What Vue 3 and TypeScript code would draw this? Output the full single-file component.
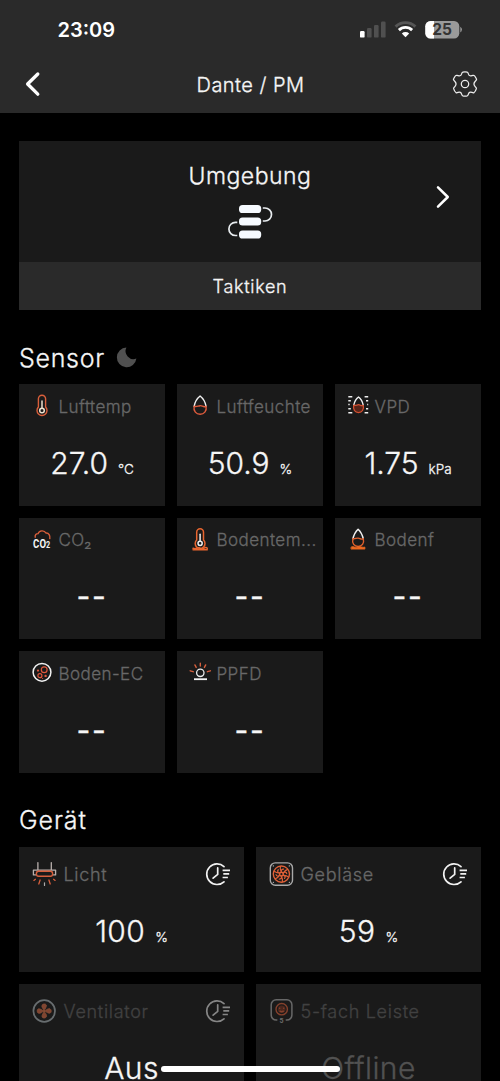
<script setup lang="ts">
interface Sensor {
  icon: string
  label: string
  value: string
  unit?: string
}

interface Device {
  icon: string
  label: string
  value: string
  unit?: string
  timer?: boolean
  state?: 'off' | 'offline'
}

const sensors: Sensor[] = [
  { icon: 'temp', label: 'Lufttemp', value: '27.0', unit: '°C' },
  { icon: 'drop', label: 'Luftfeuchte', value: '50.9', unit: '%' },
  { icon: 'vpd', label: 'VPD', value: '1.75', unit: 'kPa' },
  { icon: 'co2', label: 'CO₂', value: '--' },
  { icon: 'soiltemp', label: 'Bodentem...', value: '--' },
  { icon: 'soildrop', label: 'Bodenf', value: '--' },
  { icon: 'ec', label: 'Boden-EC', value: '--' },
  { icon: 'ppfd', label: 'PPFD', value: '--' },
]

const devices: Device[] = [
  { icon: 'light', label: 'Licht', value: '100', unit: '%', timer: true },
  { icon: 'blower', label: 'Gebläse', value: '59', unit: '%', timer: true },
  { icon: 'fan', label: 'Ventilator', value: 'Aus', timer: true, state: 'off' },
  { icon: 'strip', label: '5-fach Leiste', value: 'Offline', state: 'offline' },
]

const spokes = [0, 60, 120, 180, 240, 300]
const blades = [0, 90, 180, 270]
</script>

<template>
  <div class="screen">
    <header class="top">
      <div class="status">
        <span class="clock">23:09</span>
        <svg class="status-icons" width="104" height="20" viewBox="0 0 104 20">
          <rect x="0" y="11" width="4.6" height="6.6" rx="1.2" fill="#fff" />
          <g fill="#505050">
            <rect x="7" y="8" width="4.6" height="9.6" rx="1.2" />
            <rect x="14" y="5" width="4.6" height="12.6" rx="1.2" />
            <rect x="21" y="1.6" width="4.6" height="16" rx="1.2" />
          </g>
          <g fill="none" stroke-width="2.9">
            <path d="M35.6 6.6a14.2 14.2 0 0 1 19.8 0" stroke="#565656" />
            <path d="M38.9 10.1a9.4 9.4 0 0 1 13.2 0" stroke="#fff" />
          </g>
          <path d="M45.5 17.3l-3.7-3.9a5.4 5.4 0 0 1 7.4 0z" fill="#fff" />
          <rect x="65.3" y="1" width="34" height="17.4" rx="5.2" fill="#9a9a9a" />
          <path d="M70.5 1H74v17.4h-3.5a5.2 5.2 0 0 1-5.2-5.2v-7a5.2 5.2 0 0 1 5.2-5.2z" fill="#fff" />
          <path d="M100.3 6.8a3.2 3.2 0 0 1 0 5.6z" fill="#9a9a9a" />
          <text x="82" y="15.1" text-anchor="middle" class="battery">25</text>
        </svg>
      </div>
      <nav class="nav">
        <svg width="18" height="28" viewBox="0 0 18 28">
          <path d="M13.8 4L3.6 14l10.2 10.2" fill="none" stroke="#fff" stroke-width="3.3" stroke-linecap="round" stroke-linejoin="round" />
        </svg>
        <h1 class="title">Dante / PM</h1>
        <svg width="28" height="28" viewBox="0 0 28 28" fill="none" stroke="#eee" stroke-width="1.25" stroke-linejoin="round">
          <path d="M11.7 2.2Q14 1.5 16.3 2.2Q17.2 2.6 17.4 4Q17.8 6.1 20 5.9L22 5.3Q23.4 5 24.3 6.8Q25.7 9 25.5 9.8Q25.2 10.4 24.3 11.2Q21.6 14 24.3 16.8Q25.5 17.8 25.4 18.6Q24.6 21.2 23 22.6Q22.3 23 21 22.4Q18.1 21.4 17.4 24.1Q17.1 25.4 16.3 25.8Q14 26.4 11.7 25.8Q10.9 25.4 10.6 24.1Q9.9 21.4 7 22.4Q5.7 23 5 22.6Q3.4 21.2 2.6 18.6Q2.5 17.8 3.7 16.8Q6.4 14 3.7 11.2Q2.8 10.4 2.5 9.8Q2.3 9 3.7 6.8Q4.6 5 6 5.3L8 5.9Q10.2 6.1 10.6 4Q10.8 2.6 11.7 2.2Z" />
          <circle cx="14" cy="14" r="3.7" />
        </svg>
      </nav>
    </header>

    <main class="content">
      <section class="env">
        <div class="env-main">
          <span class="env-title">Umgebung</span>
          <svg width="46" height="36" viewBox="0 0 46 36">
            <g fill="#f6faff">
              <rect x="12" y="1" width="22.2" height="8" rx="3.6" />
              <rect x="12" y="13.6" width="22.2" height="8" rx="3.6" />
              <rect x="12" y="26.5" width="22.2" height="8" rx="3.6" />
            </g>
            <g fill="none" stroke="#e8ecef" stroke-width="1.7">
              <path d="M35.8 4h2.2a6.4 6.4 0 0 1 0 13h-2.2" />
              <path d="M10.3 18.3H8.5a6.6 6.6 0 0 0 0 13.2h1.8" />
            </g>
          </svg>
          <svg class="env-arrow" width="18" height="28" viewBox="0 0 18 28">
            <path d="M4 4.4l9.8 9.6L4 23.7" fill="none" stroke="#fff" stroke-width="2.5" stroke-linecap="round" stroke-linejoin="round" />
          </svg>
        </div>
        <div class="env-foot">Taktiken</div>
      </section>

      <h2 class="heading sensor-heading">
        Sensor
        <svg width="22" height="22" viewBox="0 0 22 22">
          <path d="M10.4 .6A9.8 9.8 0 1 0 20.4 11.6A8 8 0 0 1 10.4 .6Z" fill="#505050" />
        </svg>
      </h2>

      <section class="sensors">
        <article v-for="s in sensors" :key="s.label" class="card sensor">
          <div class="row">
            <svg class="glyph" width="24" height="26" viewBox="0 0 24 26" fill="none" stroke-linecap="round" stroke-linejoin="round">
              <g v-if="s.icon === 'temp'">
                <path d="M8.4 14V5.8a3.6 3.6 0 0 1 7.2 0V14a5 5 0 1 1-7.2 0z" stroke="#d95f3b" stroke-width="1.4" />
                <path d="M12 8v7" stroke="#eee1cf" stroke-width="1.5" />
                <circle cx="12" cy="17.5" r="2.3" stroke="#eee1cf" stroke-width="1.5" />
              </g>
              <g v-else-if="s.icon === 'drop'" stroke-width="1.4">
                <path d="M6.1 13.3C6.9 9.2 9.5 5 12.1 3c2.6 2 5.2 6.2 6 10.3" stroke="#f0f0f0" />
                <path d="M6.1 13.3c-.9 4.8 2.2 8 6 8s6.9-3.2 6-8c-2.8 1.6-3.8-1-6.1-.6s-3.5 1.4-5.9.6z" stroke="#df5c3d" />
              </g>
              <g v-else-if="s.icon === 'vpd'">
                <path d="M2.3 3.7h4M2.3 7.7h2.5M2.3 11.6h1.4M2.3 15.7h2.5M2.3 19.7h4M18.6 3.7h3.6M20 7.7h2.2M21.2 11.6h1M20 15.7h2.2M18.6 19.7h3.6" stroke="#eee" stroke-width="1.5" stroke-linecap="butt" />
                <path d="M7.7 12.3C8.4 9 10.3 5.6 12.5 4c2.2 1.6 4.1 5 4.8 8.3" stroke="#f0f0f0" stroke-width="1.4" />
                <path d="M7.7 12.3c-.9 4.1 1.3 7.3 4.8 7.3s5.7-3.2 4.8-7.3c-2 1.4-3.2-.8-4.8-.6s-2.8 1-4.8.6z" stroke="#d35031" stroke-width="1.3" fill="#562419" />
              </g>
              <g v-else-if="s.icon === 'co2'">
                <path d="M5.2 10.2c-.4-2.5 1-3.7 2.9-3.6 1-3.4 6.3-3.6 7.8-.6 3-.3 4.4 2.6 3.9 5.6" stroke="#d95f3b" stroke-width="1.4" />
                <text x="3.9" y="20.6" transform="scale(0.8 1)" class="co2">CO<tspan class="co2-small">2</tspan></text>
              </g>
              <g v-else-if="s.icon === 'soiltemp'">
                <path d="M8.7 13V5.2a3.4 3.4 0 0 1 6.8 0V13a4.9 4.9 0 1 1-6.8 0z" stroke="#e8652f" stroke-width="1.5" />
                <path d="M12.1 7.2v7" stroke="#eee" stroke-width="1.5" />
                <circle cx="12.1" cy="16.3" r="2.1" stroke="#eee" stroke-width="1.5" />
                <path d="M5 21.3q2 .8 4-.1t3.5.3 3.5-.3 3.3.1M5 22.8h14.3" stroke="#e8652f" stroke-width="1.5" />
              </g>
              <g v-else-if="s.icon === 'soildrop'">
                <path d="M6.9 11.7C7.9 8 9.8 4.4 12.1 2.3c2.3 2.1 4.2 5.7 5.2 9.4" stroke="#f0f0f0" stroke-width="1.5" />
                <path d="M6.9 11.7c-1.2 4.8 1.5 7.8 5.2 7.8s6.4-3 5.2-7.8c-2 1.4-3.3-.5-5.2-.6s-3.1 1-5.2.6z" stroke="#e0602d" stroke-width="1.4" />
                <path d="M5.4 19.9q1.4-.7 2.9.1t3.8.1 3.6-.1 3.2.1v2H5.4z" fill="#ec6820" stroke="#ec6820" stroke-width=".8" />
              </g>
              <g v-else-if="s.icon === 'ec'">
                <circle cx="12" cy="12.3" r="8.9" stroke="#f2f2f2" stroke-width="1.5" />
                <circle cx="14.2" cy="9.8" r="2.9" stroke="#e0563b" stroke-width="1.2" />
                <circle cx="9.9" cy="15.7" r="2" stroke="#e0563b" stroke-width="1.2" />
                <circle cx="8" cy="10.6" r="1.1" fill="#e0563b" />
                <circle cx="15.6" cy="15.9" r="1.2" fill="#e0563b" />
                <circle cx="12.6" cy="18.5" r=".6" fill="#e0563b" />
              </g>
              <g v-else>
                <circle cx="12.3" cy="12.8" r="3.7" stroke="#ececec" stroke-width="1.3" />
                <path d="M6 19.2h13" stroke="#f4f4f4" stroke-width="1.8" stroke-linecap="butt" />
                <path d="M12.3 3.2v2.9M6.9 4.9l1.3 2.5M17.7 4.9l-1.3 2.5M2.2 10.8l3 .9M22.4 10.8l-3 .9" stroke="#d65f3d" stroke-width="1.4" />
              </g>
            </svg>
            <span class="label">{{ s.label }}</span>
          </div>
          <div class="reading">
            <span class="value" :class="{ empty: !s.unit }">{{ s.value }}</span>
            <span v-if="s.unit" class="unit">{{ s.unit }}</span>
          </div>
        </article>
      </section>

      <h2 class="heading device-heading">Gerät</h2>

      <section class="devices">
        <article v-for="d in devices" :key="d.label" class="card device" :class="d.state">
          <div class="row">
            <svg class="glyph" width="26" height="26" viewBox="0 0 26 26" fill="none" stroke-linecap="round" stroke-linejoin="round">
              <g v-if="d.icon === 'light'">
                <path d="M6.9 1.6v7.2M20.3 1.6v7.2M4.5 13.9H2.4V9.1h22.2v4.8h-2.1" stroke="#b9b0ad" stroke-width="1.3" />
                <rect x="5.4" y="10.3" width="16.2" height="5" rx="2.2" stroke="#d65f3d" stroke-width="1.4" />
                <path d="M4.4 18.3l-1.5 1.1M22.6 18.3l1.5 1.1M9.1 19l-1.3 4M17.9 19l1.3 4" stroke="#d65f3d" stroke-width="1.3" />
                <path d="M13.5 21.8v2.6" stroke="#aaa" stroke-width="1.2" />
              </g>
              <g v-else-if="d.icon === 'blower'">
                <rect x="2.3" y="1.9" width="22.2" height="22.4" rx="5" stroke="#a9a9a9" stroke-width="1.4" />
                <path d="M5.3 4.9h.2M21.3 4.9h.2M5.3 21.3h.2M21.3 21.3h.2" stroke="#a9a9a9" stroke-width="1.3" />
                <circle cx="13.4" cy="13.1" r="8.1" stroke="#df6037" stroke-width="1.4" />
                <circle cx="13.4" cy="13.1" r="1.9" stroke="#df6037" stroke-width="1.4" />
                <path v-for="a in spokes" :key="a" d="M13.4 11.2C12.8 9 14 7.9 15.6 8.2M13.4 11.2C12.4 9 11.8 7.4 12.4 5.3" :transform="`rotate(${a} 13.4 13.1)`" stroke="#df6037" stroke-width="1.2" />
              </g>
              <g v-else-if="d.icon === 'fan'">
                <circle cx="13.2" cy="13" r="10.8" stroke="#b5bfc3" stroke-width="1.7" />
                <path v-for="a in blades" :key="a" d="M13.2 13c-.4-2-3-3.4-2.2-5.8.8-1.6 3.6-1.6 4.3-.2.5 2.3-1.4 3.4-2.1 6z" :transform="`rotate(${a} 13.2 13)`" fill="#e87048" stroke="#f08050" stroke-width=".8" />
              </g>
              <g v-else>
                <path d="M8.2 22.1H7.6a5 5 0 0 1-5-5V6.7a5 5 0 0 1 5-5h10.7a5 5 0 0 1 5 5v10.4a5 5 0 0 1-5 5h-.6" transform="translate(.6)" stroke="#b4b4b4" stroke-width="1.5" />
                <circle cx="13.7" cy="11.2" r="5.7" stroke="#f0683f" stroke-width="1.4" />
                <circle cx="13.7" cy="11.2" r="3.8" fill="#7a321f" />
                <path d="M11.6 10.2h.1M15.7 10.2h.1M12 13.2q1.7 1.2 3.4 0" stroke="#f0683f" stroke-width="1.5" />
                <text x="13.6" y="24.5" text-anchor="middle" class="socket-count">5</text>
              </g>
            </svg>
            <span class="label">{{ d.label }}</span>
            <svg v-if="d.timer" class="timer" width="26" height="26" viewBox="0 0 26 26" fill="none" stroke="#f2f2f2" stroke-width="1.7" stroke-linecap="round" stroke-linejoin="round">
              <path d="M19 5.6A10.3 10.3 0 1 0 19 20.8" />
              <path d="M12.7 6.9v6.5l-4.6 3.8" />
              <path d="M17.6 9.3h7.4M18.3 12.9h5.9M17.6 16.5h5.3" stroke-linecap="butt" />
            </svg>
          </div>
          <div class="reading">
            <span class="value">{{ d.value }}</span>
            <span v-if="d.unit" class="unit">{{ d.unit }}</span>
          </div>
        </article>
      </section>
    </main>

    <div class="home-indicator"></div>
  </div>
</template>

<style>
body {
  background: #000;
}
</style>

<style scoped>
.screen {
  position: relative;
  box-sizing: border-box;
  height: 1081px;
  overflow: hidden;
  background: #000;
  color: #f6f6f6;
  font-family: Inter, "Noto Sans", sans-serif;
  font-weight: 300;
}

svg {
  display: block;
  flex: none;
}

/* Slightly heavier than the light cut, lighter than regular. */
.title,
.env-title,
.env-foot,
.heading,
.label,
.value,
.unit {
  -webkit-text-stroke: 0.3px currentColor;
}

.top {
  height: 113px;
  background: #2a2a2a;
}

.status {
  display: flex;
  justify-content: space-between;
  align-items: center;
  height: 60px;
  padding: 0 36px 0 57.5px;
}

.clock {
  font-size: 20px;
  font-weight: 600;
  line-height: 25px;
  color: #fff;
}

.battery {
  font-size: 15.5px;
  font-weight: 700;
  fill: #333;
}

.nav {
  display: flex;
  justify-content: space-between;
  align-items: center;
  height: 48px;
  padding: 0 21px 0 24px;
}

.title {
  margin: 1px 0 0 8px;
  font-size: 20px;
  font-weight: 300;
  letter-spacing: 0.45px;
}

.content {
  padding: 28px 19px 0;
}

.env-main {
  position: relative;
  display: flex;
  flex-direction: column;
  align-items: center;
  box-sizing: border-box;
  height: 121px;
  padding-top: 20px;
  background: #1a1a1a;
}

.env-title {
  margin-bottom: 13px;
  font-size: 23px;
  line-height: 30px;
  letter-spacing: 0.5px;
}

.env-arrow {
  position: absolute;
  right: 29px;
  top: 42px;
}

.env-foot {
  height: 48px;
  line-height: 49px;
  background: #2a2a2a;
  text-align: center;
  font-size: 18px;
  letter-spacing: 0.7px;
}

.heading {
  display: flex;
  align-items: center;
  height: 34px;
  margin: 0;
  font-size: 25px;
  font-weight: 300;
  letter-spacing: 0.7px;
}

.sensor-heading {
  gap: 11px;
  margin-top: 31px;
  margin-bottom: 9px;
}

.device-heading {
  margin-top: 30px;
  margin-bottom: 10px;
  letter-spacing: 0.9px;
}

.sensors,
.devices {
  display: grid;
  gap: 12px;
}

.sensors {
  grid-template-columns: repeat(3, 1fr);
}

.devices {
  grid-template-columns: repeat(2, 1fr);
}

.card {
  box-sizing: border-box;
  min-width: 0;
  background: #1a1a1a;
}

.sensor {
  height: 121.7px;
  padding: 9px 6px 0 11px;
}

.device {
  height: 125px;
  padding: 14px 13px 0 12px;
}

.row {
  display: flex;
  align-items: center;
  height: 26px;
}

.label {
  margin: 1px 0 0 4.5px;
  white-space: nowrap;
  font-size: 17px;
  line-height: 26px;
  letter-spacing: 0.45px;
  color: #686868;
}

.device .label {
  margin-left: 6.5px;
  font-size: 18px;
  letter-spacing: 0.7px;
}

.timer {
  margin-left: auto;
}

.reading {
  display: flex;
  justify-content: center;
  align-items: baseline;
  gap: 10px;
  height: 40px;
  margin-top: 23.5px;
  line-height: 40px;
}

.sensor .reading {
  padding-right: 5px;
}

.device .reading {
  padding-left: 1px;
}

.value {
  font-size: 30px;
}

.device .value {
  letter-spacing: 0.4px;
}

.empty {
  font-weight: 400;
  letter-spacing: 1.8px;
}

.unit {
  font-size: 13.5px;
}

.off .row,
.offline .row,
.offline .value {
  opacity: 0.5;
}

.offline .value {
  color: #888;
}

.co2 {
  font: 700 12px Roboto, sans-serif;
  fill: #f4f4f4;
}

.co2-small {
  font-size: 9px;
}

.socket-count {
  font: 700 7px Roboto, sans-serif;
  fill: #bbb;
}

.home-indicator {
  position: absolute;
  left: 161px;
  bottom: 9px;
  width: 179px;
  height: 6px;
  border-radius: 3px;
  background: #fff;
}
</style>
